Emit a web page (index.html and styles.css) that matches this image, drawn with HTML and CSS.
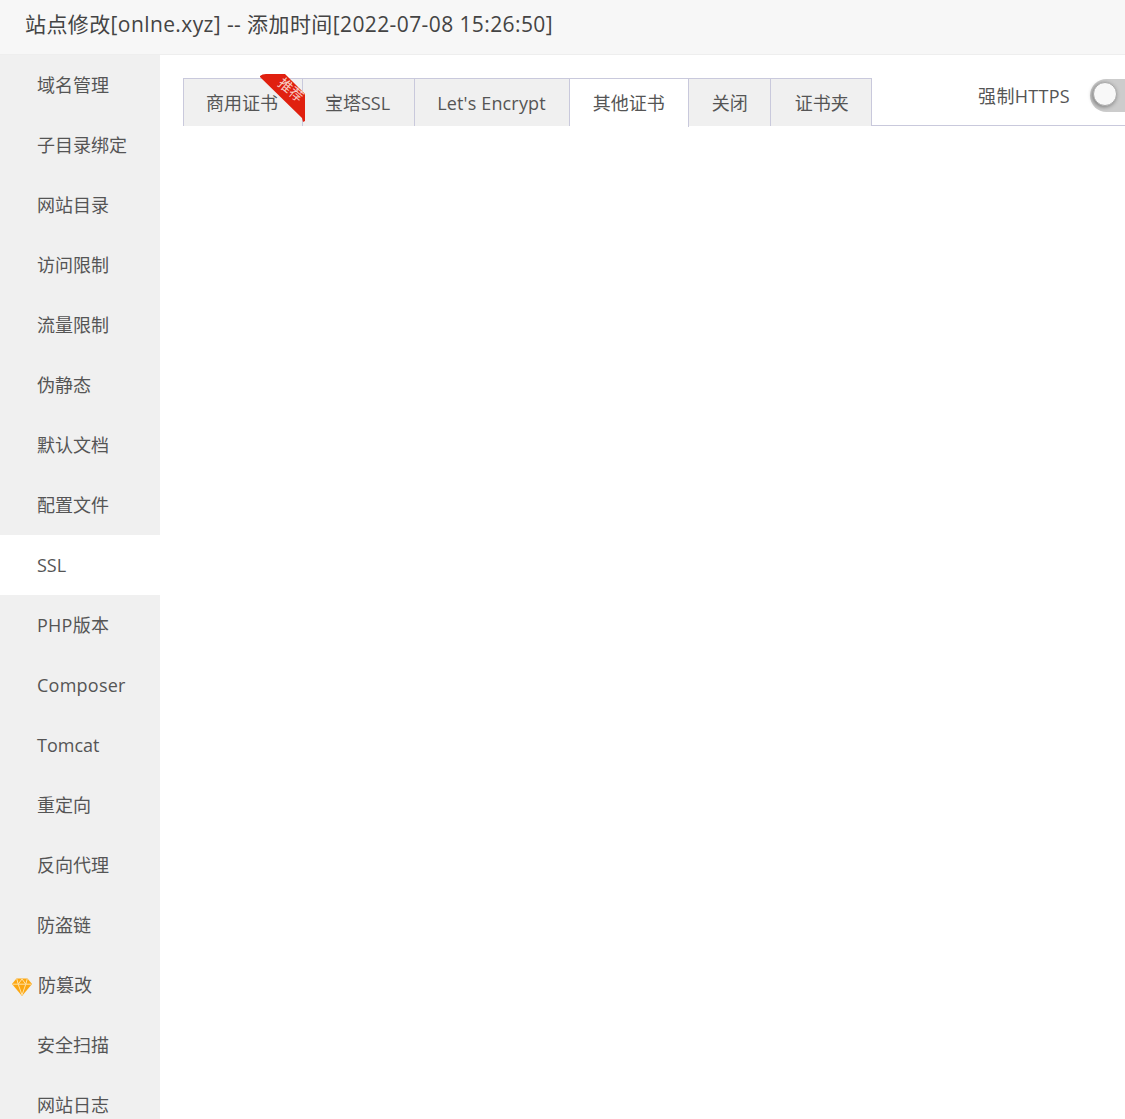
FILE: index.html
```html
<!DOCTYPE html>
<html lang="en">
<head>
<meta charset="UTF-8">
<title>站点修改</title>
<link rel="stylesheet" href="styles.css">
</head>
<body>
<div class="title">站点修改[onlne.xyz] -- 添加时间[2022-07-08 15:26:50]</div>
<div class="layout">
  <ul class="side">
    <li>域名管理</li>
    <li>子目录绑定</li>
    <li>网站目录</li>
    <li>访问限制</li>
    <li>流量限制</li>
    <li>伪静态</li>
    <li>默认文档</li>
    <li>配置文件</li>
    <li class="on">SSL</li>
    <li class="en">PHP版本</li>
    <li class="en">Composer</li>
    <li>Tomcat</li>
    <li>重定向</li>
    <li>反向代理</li>
    <li>防盗链</li>
    <li class="pro">
      <svg class="gem" viewBox="0 0 20 18" width="20" height="18">
        <path d="M4.5 0.5H15.5L20 6L10 18L0 6Z" fill="#fca712"/>
        <path d="M0.8 6.2H19.2M6.2 6.2L10 17M13.8 6.2L10 17M4.8 1L6.2 6.2L10 1L13.8 6.2L15.2 1" fill="none" stroke="#ffe2a6" stroke-width="1"/>
      </svg>防篡改
    </li>
    <li>安全扫描</li>
    <li>网站日志</li>
  </ul>
  <div class="main">
    <div class="tabbar">
      <div class="tab nudge rec">商用证书
        <svg class="ribbon" viewBox="0 0 48 50" width="48" height="50">
          <path d="M1 2Q3 0 7 0H26L46 20V47L44 48L43 44L1 3Z" fill="#e0200f"/>
        </svg>
        <span class="ribbon-text">推荐</span>
      </div>
      <div class="tab nudge">宝塔SSL</div>
      <div class="tab nudge le">Let's Encrypt</div>
      <div class="tab on">其他证书</div>
      <div class="tab short">关闭</div>
      <div class="tab last">证书夹</div>
      <div class="force">
        <span>强制HTTPS</span>
        <span class="switch"><i></i></span>
      </div>
    </div>
  </div>
</div>
</body>
</html>
```

FILE: styles.css
```css
html,body{margin:0;height:100%;overflow:hidden}
body{font-family:"Open Sans","Noto Sans CJK SC",sans-serif;color:#555;background:#fff}
.title{height:54px;line-height:48px;padding-left:25px;font-size:21px;letter-spacing:.4px;background:#f7f7f7;border-bottom:1px solid #eee;color:#444;white-space:nowrap}
.layout{display:flex;height:1064px}
.side{width:160px;flex:none;margin:0;padding:0;list-style:none;background:#f0f0f0;font-size:18px}
.side li{height:60px;line-height:60px;padding-left:37px;color:#555;white-space:nowrap}
.side li.on{background:#fff}
.side li.en{letter-spacing:.25px}
.side li.pro{display:flex;align-items:center;padding-left:12px;gap:6px}
.gem{margin-top:3px}
.main{flex:1;min-width:0;padding:23px 0 0 23px;overflow:hidden}
.tabbar{display:flex;height:47px;margin-right:-30px;border-bottom:1px solid #c9c9dc}
.tab{position:relative;height:47px;line-height:48px;padding:0 23px;font-size:18px;background:#f0f0f0;border:1px solid #c9c9dc;border-bottom:0;border-left:0;white-space:nowrap}
.tab:first-child{border-left:1px solid #c9c9dc}
.tab.nudge{padding:0 24px 0 22px}
.tab.le{padding-right:23px;letter-spacing:.16px}
.tab.on{background:#fff;height:48px}
.tab.short{padding-right:22px}
.tab.last{padding:0 22px 0 24px}
.tab.rec{z-index:1}
.ribbon{position:absolute;left:75px;top:-5px}
.ribbon-text{position:absolute;left:92px;top:1px;width:30px;line-height:20px;font-size:14px;text-align:center;color:#f7cfc6;transform:rotate(40deg)}
.force{display:flex;align-items:flex-start;margin-left:auto;font-size:18px;line-height:36px;letter-spacing:.3px}
.force span:first-child{margin-right:20px}
.switch{position:relative;display:block;width:65px;height:33px;margin-top:1px;border-radius:17px;background:#ccc}
.switch i{position:absolute;left:3px;top:3px;width:22px;height:22px;border-radius:50%;background:#f8f8f8;border:1px solid #aaa;box-shadow:-1px 1px 4px rgba(0,0,0,.4)}
```
